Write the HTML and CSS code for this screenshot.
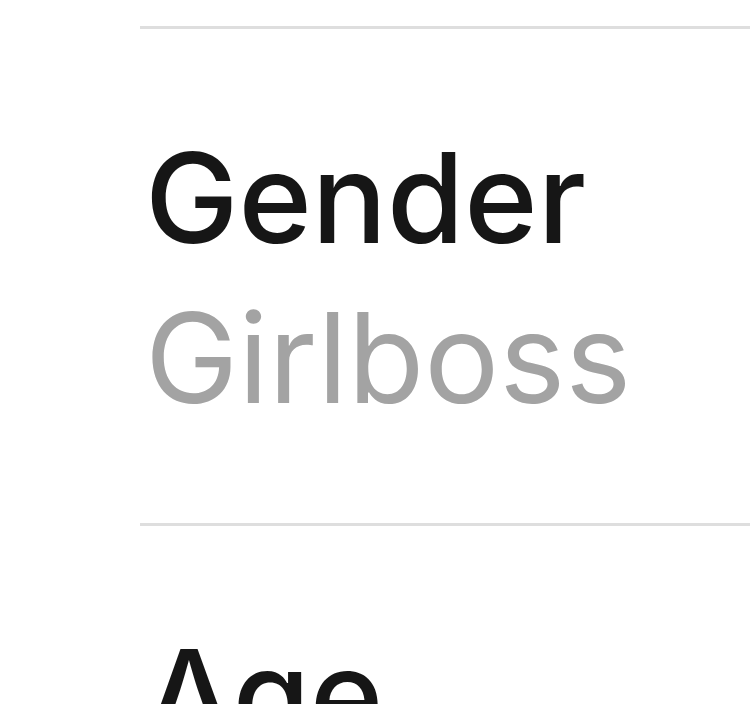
FILE: index.html
```html
<!DOCTYPE html>
<html>
<head>
<meta charset="utf-8">
<link rel="stylesheet" href="styles.css">
</head>
<body>
<div class="list">
  <div class="item">
    <div class="label">Gender</div>
    <div class="value">Girlboss</div>
  </div>
  <div class="item">
    <div class="label">Age</div>
  </div>
</div>
</body>
</html>
```
FILE: styles.css
```css
html, body {
  margin: 0;
  padding: 0;
  background: #ffffff;
  overflow: hidden;
}
.list {
  margin-top: 26px;
  margin-left: 140px;
  font-family: "Inter", "Liberation Sans", sans-serif;
}
.item {
  border-top: 3px solid #dedede;
  padding: 89px 0 85px 5px;
}
.label {
  font-size: 125px;
  line-height: 160px;
  font-weight: 500;
  color: #161616;
}
.value {
  font-size: 125px;
  line-height: 160px;
  font-weight: 400;
  color: #a3a3a3;
}
```
